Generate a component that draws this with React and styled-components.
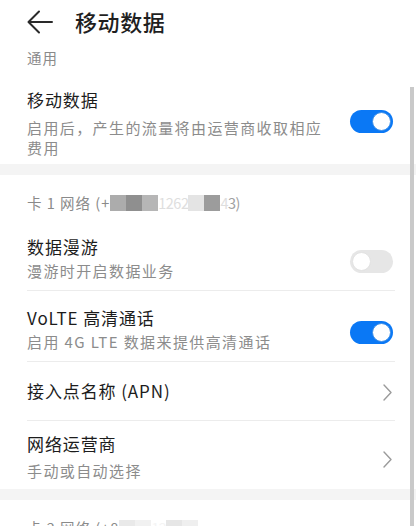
import React from "react";
import styled, { createGlobalStyle } from "styled-components";

const GlobalStyle = createGlobalStyle`
  html, body {
    margin: 0;
    padding: 0;
    background: #ffffff;
    overflow: hidden;
  }
  body {
    font-family: "Noto Sans CJK SC", "Noto Sans", Roboto, sans-serif;
    -webkit-font-smoothing: antialiased;
  }
`;

const Page = styled.div`
  position: relative;
  width: 416px;
  height: 526px;
  overflow: hidden;
  background: #ffffff;
  display: flex;
  flex-direction: column;
`;

const Header = styled.div`
  height: 42px;
  display: flex;
  align-items: center;
  padding-left: 27px;
  gap: 22px;
  flex-shrink: 0;
`;

const BackButton = styled.div`
  width: 26px;
  height: 24px;
  display: flex;
  align-items: center;
  justify-content: center;
  margin-top: 2px;
`;

const Title = styled.h1`
  margin: 0;
  font-size: 22px;
  font-weight: 500;
  color: #1f1f1f;
  letter-spacing: 0.6px;
  line-height: 40px;
`;

const Section = styled.div`
  display: flex;
  flex-direction: column;
  padding: 0 21px 0 27px;
  flex-shrink: 0;
`;

const GroupLabel = styled.div`
  display: flex;
  align-items: center;
  font-size: 14.5px;
  color: #8a8a8a;
  line-height: 20px;
  letter-spacing: 1px;
  white-space: nowrap;
  padding: ${(p) => (p.$compact ? "6px 0 6px" : "18px 0 7px")};
`;

const Masked = styled.span`
  display: inline-block;
  width: 16px;
  height: 16px;
  background: ${(p) => p.$tone};
`;

const Faint = styled.span`
  color: ${(p) => p.$ink || "#dedede"};
  letter-spacing: -0.5px;
`;

const Row = styled.div`
  display: flex;
  align-items: center;
  min-height: ${(p) => (p.$single ? "58px" : "auto")};
  padding: ${(p) => (p.$single ? "0" : `${p.$top || 15}px 0 ${p.$bottom || 9}px`)};
  box-sizing: border-box;
`;

const RowText = styled.div`
  flex: 1;
  display: flex;
  flex-direction: column;
  padding-right: 20px;
`;

const ItemTitle = styled.div`
  font-size: 17px;
  line-height: 24px;
  color: #1c1c1c;
  letter-spacing: 0.9px;
`;

const ItemSub = styled.div`
  margin-top: ${(p) => p.$gap || 2}px;
  font-size: 15px;
  line-height: ${(p) => p.$lh || 20}px;
  color: #8c8c8c;
  letter-spacing: 1.4px;
`;

const Divider = styled.div`
  height: 1px;
  background: #ececec;
`;

const Band = styled.div`
  height: 11px;
  background: #f4f4f4;
  flex-shrink: 0;
`;

const Track = styled.div`
  position: relative;
  width: 43px;
  height: 23px;
  border-radius: 12px;
  background: ${(p) => (p.$on ? "#0a78f5" : "#e6e6e6")};
  margin-right: 2px;
  flex-shrink: 0;
  margin-top: ${(p) => p.$shift || 0}px;
`;

const Knob = styled.div`
  position: absolute;
  top: 2px;
  left: ${(p) => (p.$on ? "22px" : "2px")};
  width: 19px;
  height: 19px;
  box-sizing: border-box;
  border-radius: 50%;
  background: #ffffff;
  border: 1px solid ${(p) => (p.$on ? "#3d8fe8" : "#e2e2e2")};
`;

const Chevron = styled.div`
  width: 12px;
  display: flex;
  justify-content: flex-end;
  margin-right: 3px;
  flex-shrink: 0;
  margin-top: ${(p) => p.$shift || 0}px;
`;

const Scrollbar = styled.div`
  position: absolute;
  left: 410px;
  top: 87px;
  width: 4px;
  bottom: 0;
  background: #c9c9c9;
`;

function Toggle({ on, shift }) {
  return (
    <Track $on={on} $shift={shift}>
      <Knob $on={on} />
    </Track>
  );
}

function Arrow({ shift }) {
  return (
    <Chevron $shift={shift}>
      <svg width="9" height="17" viewBox="0 0 9 17">
        <path d="M1 1 L8 8.5 L1 16" fill="none" stroke="#9b9b9b" strokeWidth="1.4" strokeLinecap="round" strokeLinejoin="round" />
      </svg>
    </Chevron>
  );
}

export default function App() {
  return (
    <Page>
      <GlobalStyle />
      <Header>
        <BackButton>
          <svg width="26" height="24" viewBox="0 0 26 24">
            <path d="M25 12 H2 M12 1.5 L1.5 12 L12 22.5" fill="none" stroke="#2a2a2a" strokeWidth="2" strokeLinecap="round" strokeLinejoin="round" />
          </svg>
        </BackButton>
        <Title>移动数据</Title>
      </Header>

      <Section>
        <GroupLabel $compact>通用</GroupLabel>
        <Row $top={14} $bottom={7}>
          <RowText>
            <ItemTitle>移动数据</ItemTitle>
            <ItemSub $gap={6} $lh={19.5}>启用后，产生的流量将由运营商收取相应费用</ItemSub>
          </RowText>
          <Toggle on shift={-2} />
        </Row>
      </Section>

      <Band />

      <Section>
        <GroupLabel>
          卡 1 网络 (+
          <Masked $tone="#acacac" />
          <Masked $tone="#8f8f8f" />
          <Masked $tone="#b6b6b6" />
          <Faint>1262</Faint>
          <Masked $tone="#e4e4e4" />
          <Masked $tone="#9c9c9c" />
          <Faint>4</Faint>
          <Faint $ink="#a0a0a0">3)</Faint>
        </GroupLabel>
        <Row>
          <RowText>
            <ItemTitle>数据漫游</ItemTitle>
            <ItemSub>漫游时开启数据业务</ItemSub>
          </RowText>
          <Toggle shift={6} />
        </Row>
        <Divider />
        <Row>
          <RowText>
            <ItemTitle>VoLTE 高清通话</ItemTitle>
            <ItemSub>启用 4G LTE 数据来提供高清通话</ItemSub>
          </RowText>
          <Toggle on shift={6} />
        </Row>
        <Divider />
        <Row $single>
          <RowText>
            <ItemTitle>接入点名称 (APN)</ItemTitle>
          </RowText>
          <Arrow shift={2} />
        </Row>
        <Divider />
        <Row $top={11} $bottom={8}>
          <RowText>
            <ItemTitle>网络运营商</ItemTitle>
            <ItemSub $gap={5}>手动或自动选择</ItemSub>
          </RowText>
          <Arrow shift={6} />
        </Row>
      </Section>

      <Band />

      <Section>
        <GroupLabel>
          卡 2 网络 (+8
          <Masked $tone="#e9e9e9" />
          <Masked $tone="#f1f1f1" />
          <Faint $ink="#f4f4f4">12</Faint>
          <Masked $tone="#e6e6e6" />
          <Masked $tone="#efefef" />
        </GroupLabel>
      </Section>

      <Scrollbar />
    </Page>
  );
}
